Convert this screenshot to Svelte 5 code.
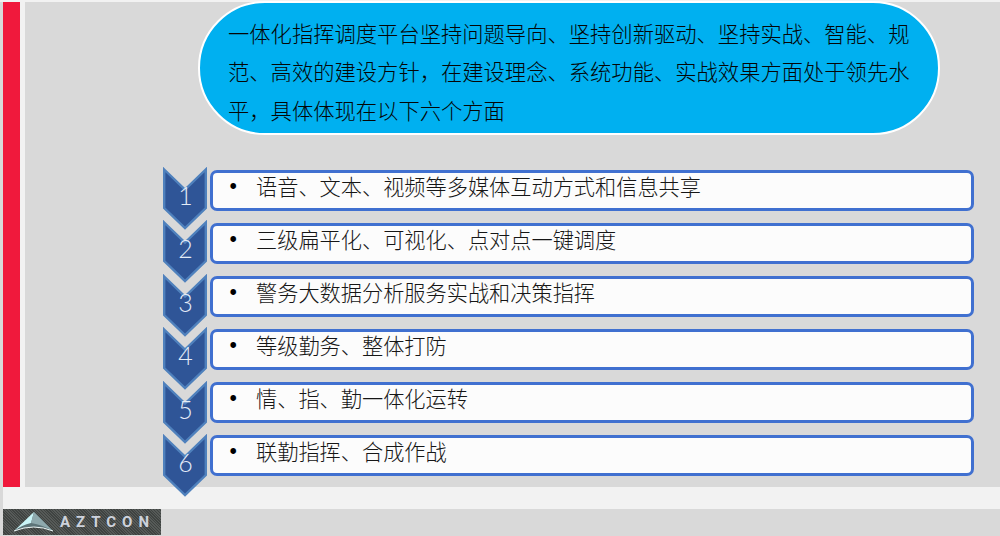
<script>
	const items = [
		'语音、文本、视频等多媒体互动方式和信息共享',
		'三级扁平化、可视化、点对点一键调度',
		'警务大数据分析服务实战和决策指挥',
		'等级勤务、整体打防',
		'情、指、勤一体化运转',
		'联勤指挥、合成作战'
	]
</script>

<div class="slide">
	<div class="main">
		<div class="rail"></div>
		<div class="content">
			<p class="intro">一体化指挥调度平台坚持问题导向、坚持创新驱动、坚持实战、智能、规范、高效的建设方针，在建设理念、系统功能、实战效果方面处于领先水平，具体体现在以下六个方面</p>
			<div class="list">
				<div class="chevrons">
					{#each items as _, i}
						<svg class="chevron" width="44" height="63" viewBox="0 0 44 63">
							<path d="M1.2 2.5 L22 22.5 L42.8 2.5 V41 L22 61 L1.2 41 Z" fill="#2f5597" stroke="#4f81bd" stroke-width="2.4" />
							<text x="22.5" y="38" text-anchor="middle">{i + 1}</text>
						</svg>
					{/each}
				</div>
				<div class="rows">
					{#each items as item}
						<div class="row">
							<span class="bullet">•</span>
							<span>{item}</span>
						</div>
					{/each}
				</div>
			</div>
		</div>
	</div>
	<div class="strip"></div>
	<div class="footer">
		<div class="logo">
			<svg width="42" height="22" viewBox="0 0 42 22">
				<path d="M1 20 L21 1 L40 20 Q21 12 1 20 Z" fill="#5d7478" />
				<path d="M1 20 L21 1 L18 12 Q9 14 1 20 Z" fill="#c9f4f6" />
				<path d="M21 1 L40 20 Q30 14 18 12 Z" fill="#8ea9ad" />
				<path d="M1 20 Q21 12 40 20" fill="none" stroke="#eef8f8" stroke-width="1" />
			</svg>
			<span class="brand">AZTCON</span>
		</div>
	</div>
</div>

<style>
	:global(body) {
		margin: 0;
	}

	.slide {
		width: 1000px;
		height: 536px;
		overflow: hidden;
		background: #d9d9d9;
		display: flex;
		flex-direction: column;
		font-family: "Noto Sans CJK SC", "Liberation Sans", sans-serif;
	}

	.main {
		height: 487px;
		flex: none;
		display: flex;
		padding-left: 3px;
		box-sizing: border-box;
		background: linear-gradient(#f2f2f2 2px, transparent 2px);
	}

	.rail {
		width: 17px;
		margin-top: 2px;
		background: #f0193c;
		border-right: 5px solid #f2f2f2;
	}

	.content {
		flex: 1;
		margin-top: 3px;
		background: #d9d9d9;
	}

	.intro {
		box-sizing: border-box;
		width: 742px;
		height: 134px;
		margin: -2px 0 0 173px;
		padding: 11px 28px 0 28px;
		background: #00b0f0;
		border: 2px solid #fff;
		border-radius: 67px;
		font-size: 21.3px;
		font-weight: 300;
		line-height: 38.3px;
		color: #050505;
	}

	.list {
		display: flex;
		gap: 3px;
		margin: 32px 0 0 138px;
	}

	.chevrons {
		display: flex;
		flex-direction: column;
		width: 44px;
		position: relative;
		z-index: 1;
	}

	.chevron {
		display: block;
		flex: none;
		margin-bottom: -9.6px;
	}

	.chevron text {
		fill: #e4ecf7;
		font-family: "Lato", "Liberation Sans", sans-serif;
		font-size: 25px;
		font-weight: 300;
	}

	.rows {
		display: flex;
		flex-direction: column;
		gap: 12px;
		margin-top: 3px;
		width: 764px;
	}

	.row {
		box-sizing: border-box;
		height: 41px;
		display: flex;
		align-items: center;
		padding: 0 0 9px 16.5px;
		background: #fcfcfc;
		border: 3px solid #4070d0;
		border-radius: 7px;
		font-size: 21.2px;
		font-weight: 300;
		line-height: 30px;
		color: #161616;
	}

	.bullet {
		width: 26.5px;
		flex: none;
		font-family: "Liberation Sans", sans-serif;
		color: #000;
	}

	.strip {
		height: 22px;
		margin-left: 3px;
		background: #f2f2f2;
	}

	.footer {
		flex: 1;
		padding-left: 3px;
	}

	.logo {
		width: 158px;
		height: 26px;
		display: flex;
		align-items: center;
		gap: 5px;
		padding-left: 10px;
		box-sizing: border-box;
		background: repeating-linear-gradient(45deg, #3f4341 0 1px, #565a58 1px 2px);
	}

	.brand {
		font-family: "Roboto", "Liberation Sans", sans-serif;
		font-size: 15px;
		font-weight: 700;
		letter-spacing: 6px;
		color: #cdd2dc;
	}
</style>
